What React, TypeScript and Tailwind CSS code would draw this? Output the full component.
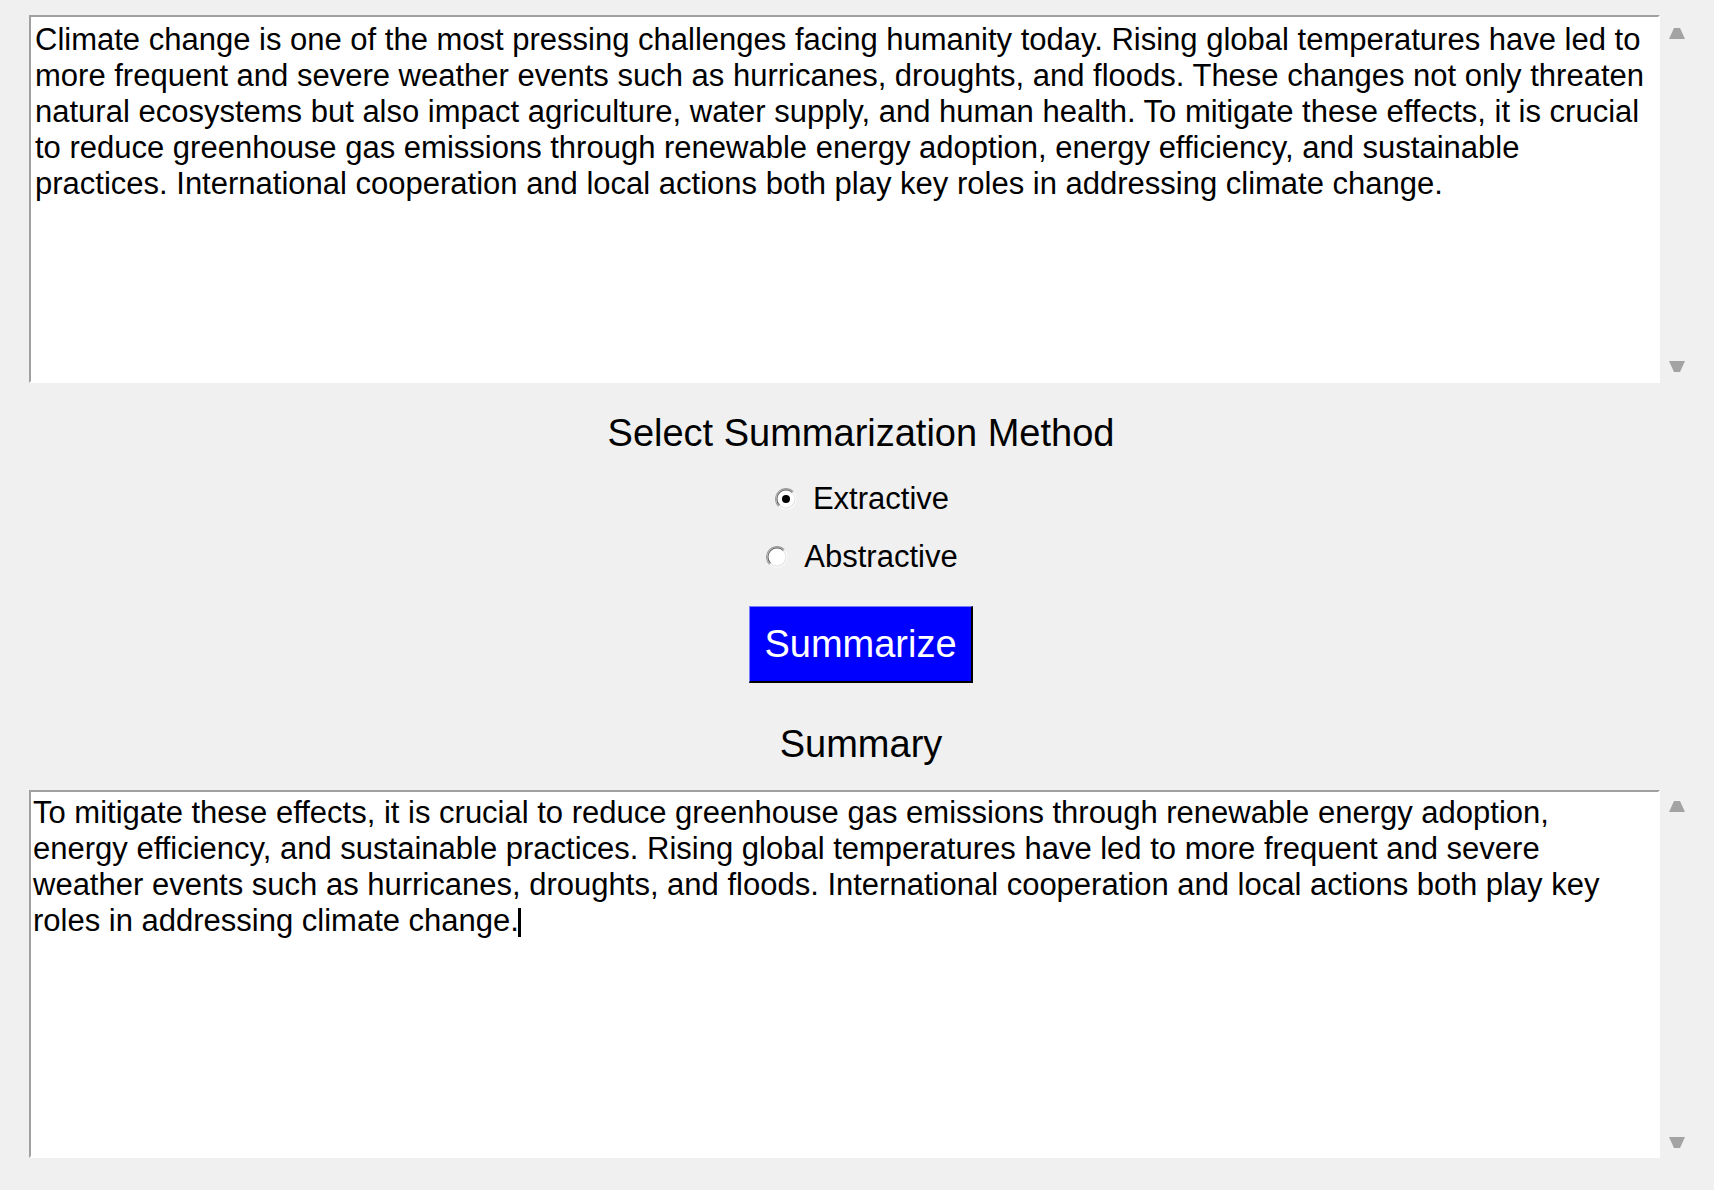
import { useState } from "react";

const inputLines = [
  "Climate change is one of the most pressing challenges facing humanity today. Rising global temperatures have led to",
  "more frequent and severe weather events such as hurricanes, droughts, and floods. These changes not only threaten",
  "natural ecosystems but also impact agriculture, water supply, and human health. To mitigate these effects, it is crucial",
  "to reduce greenhouse gas emissions through renewable energy adoption, energy efficiency, and sustainable",
  "practices. International cooperation and local actions both play key roles in addressing climate change.",
];

const summaryLines = [
  "To mitigate these effects, it is crucial to reduce greenhouse gas emissions through renewable energy adoption,",
  "energy efficiency, and sustainable practices. Rising global temperatures have led to more frequent and severe",
  "weather events such as hurricanes, droughts, and floods. International cooperation and local actions both play key",
  "roles in addressing climate change.",
];

function Arrow({ down }: { down?: boolean }) {
  return (
    <svg width="16" height="11" viewBox="0 0 16 11" className="block">
      <polygon
        points={down ? "0,0 16,0 11,11 5,11" : "5,0 11,0 16,11 0,11"}
        fill="#a3a3a3"
      />
    </svg>
  );
}

function TextBox({
  lines,
  cursor,
  top,
}: {
  lines: string[];
  cursor?: boolean;
  top?: boolean;
}) {
  return (
    <div className="flex h-[368px]">
      <div
        className={`w-[1631px] h-full bg-white border-2 border-t-[#a0a0a0] border-l-[#a0a0a0] border-r-white border-b-white text-[31px] leading-[36px] text-black overflow-hidden ${
          top ? "pt-[5px] pl-[4px]" : "pt-[3px] pl-[2px]"
        }`}
      >
        {lines.map((line, i) => (
          <div key={i} className="whitespace-nowrap">
            {line}
            {cursor && i === lines.length - 1 && (
              <span className="inline-block w-[3px] h-[29px] bg-black align-[-6px] -ml-[1px]" />
            )}
          </div>
        ))}
      </div>
      <div
        className={`w-[33px] flex flex-col items-center justify-between ${
          top ? "pt-[13px] pb-[11px]" : "pt-[11px] pb-[10px]"
        }`}
      >
        <Arrow />
        <Arrow down />
      </div>
    </div>
  );
}

function Radio({
  label,
  checked,
  onClick,
}: {
  label: string;
  checked: boolean;
  onClick: () => void;
}) {
  return (
    <button
      onClick={onClick}
      className="flex items-center gap-[16px] pl-[2px] h-[36px] text-[31px] leading-[36px] text-black"
    >
      <svg width="22" height="22" viewBox="0 0 22 22" className="block">
        <circle cx="11" cy="11" r="10.5" fill="#ffffff" />
        <path d="M3.6 18.4 A10 10 0 0 1 18.4 3.6" fill="none" stroke="#a0a0a0" strokeWidth="1.2" />
        <path d="M4.6 17.4 A8.6 8.6 0 0 1 17.4 4.6" fill="none" stroke="#696969" strokeWidth="1.2" />
        <path d="M17.4 4.6 A8.6 8.6 0 0 1 4.6 17.4" fill="none" stroke="#e3e3e3" strokeWidth="1.2" />
        {checked && <circle cx="11" cy="11" r="4" fill="#000000" />}
      </svg>
      <span>{label}</span>
    </button>
  );
}

export default function App() {
  const [method, setMethod] = useState("extractive");

  return (
    <div className="min-h-[1190px] bg-[#f0f0f0] pl-[29px] pt-[15px] font-['Liberation_Sans',Arial,sans-serif]">
      <div className="w-[1664px] flex flex-col items-center">
        <div className="self-stretch">
          <TextBox lines={inputLines} top />
        </div>

        <h2 className="mt-[28px] text-[38px] leading-[44px] text-black">
          Select Summarization Method
        </h2>

        <div className="mt-[26px] flex flex-col items-center gap-[22px]">
          <Radio
            label="Extractive"
            checked={method === "extractive"}
            onClick={() => setMethod("extractive")}
          />
          <Radio
            label="Abstractive"
            checked={method === "abstractive"}
            onClick={() => setMethod("abstractive")}
          />
        </div>

        <button className="mt-[31px] w-[224px] h-[77px] flex items-center justify-center bg-[#0000ff] border-t border-l border-[#7b7bff] border-r-2 border-b-2 border-r-black border-b-black text-white text-[38px] leading-[44px]">
          Summarize
        </button>

        <h2 className="mt-[39px] text-[38px] leading-[44px] text-black">
          Summary
        </h2>

        <div className="self-stretch mt-[24px]">
          <TextBox lines={summaryLines} cursor />
        </div>
      </div>
    </div>
  );
}
